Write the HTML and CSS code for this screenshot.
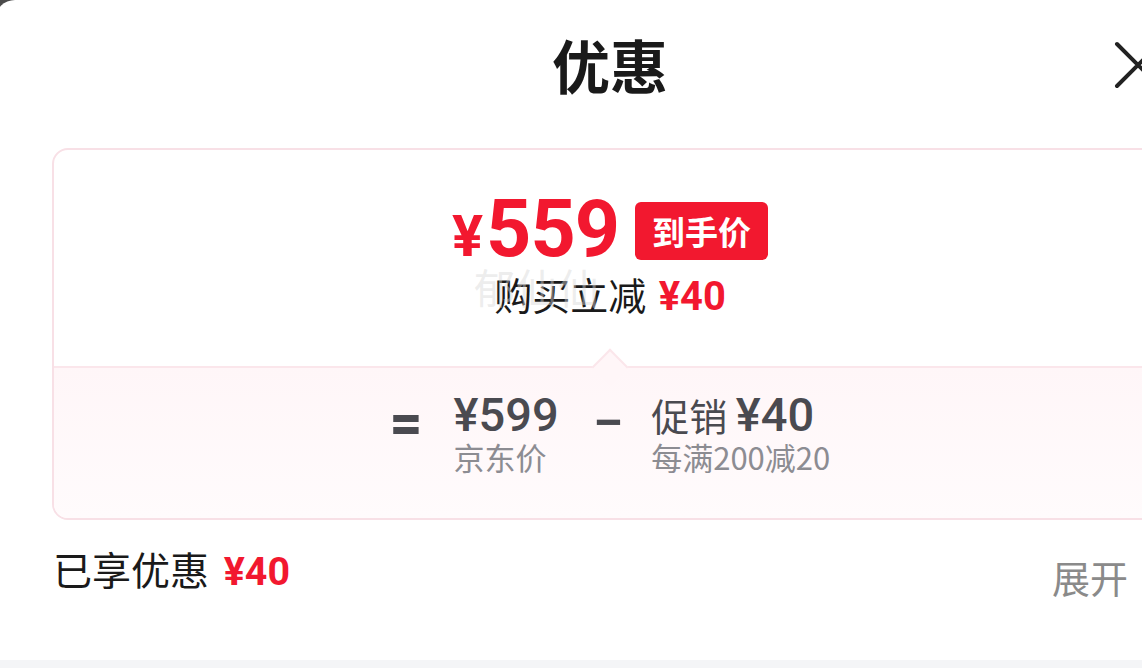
FILE: index.html
```html
<!DOCTYPE html>
<html lang="zh-CN">
<head>
    <meta charset="UTF-8">
    <meta name="viewport" content="width=device-width, initial-scale=1.0">
    <title>优惠</title>
    <link rel="stylesheet" href="styles.css">
</head>
<body>

<div class="sheet">
    <div class="sheet-header">
        <h2 class="sheet-title">优惠</h2>
        <span class="close-btn">
            <svg width="48" height="48" viewBox="0 0 48 48">
                <path d="M3 3 L45 45 M45 3 L3 45" stroke="#222" stroke-width="4" stroke-linecap="round" fill="none"/>
            </svg>
        </span>
    </div>

    <div class="price-card">
        <div class="price-top">
            <div class="final-price">
                <span class="final-amount"><span class="yen">¥</span>559</span>
                <span class="final-tag">到手价</span>
            </div>
            <div class="instant-off">购买立减 <span class="red-num">¥40</span></div>
            <span class="watermark">郁仙仙</span>
        </div>

        <div class="price-formula">
            <span class="pointer"></span>
            <span class="op">=</span>
            <div class="formula-item">
                <div class="formula-main"><span class="num">¥599</span></div>
                <div class="formula-sub">京东价</div>
            </div>
            <span class="op op-minus">−</span>
            <div class="formula-item">
                <div class="formula-main">促销 <span class="num">¥40</span></div>
                <div class="formula-sub">每满200减20</div>
            </div>
        </div>
    </div>

    <div class="saved-row">
        <div class="saved-text">已享优惠 <span class="red-num">¥40</span></div>
        <div class="expand-link">展开</div>
    </div>
</div>
<div class="page-strip"></div>

</body>
</html>
```

FILE: styles.css
```css
/* Alap */
body {
    margin: 0;
    padding: 0;
    background-color: #4b4b4b;
    font-family: "Noto Sans CJK SC", "Noto Sans", sans-serif;
    overflow: hidden;
    width: 1142px;
    height: 668px;
}

.sheet {
    width: 1230px;
    height: 660px;
    margin-left: -5px;
    background-color: #fff;
    border-top-left-radius: 20px;
    position: relative;
}

.sheet-header {
    height: 136px;
    display: flex;
    justify-content: center;
    align-items: center;
    position: relative;
}

.sheet-title {
    margin: 0;
    font-size: 58px;
    font-weight: 700;
    color: #1a1a1a;
    line-height: 1;
    padding-bottom: 8px;
}

.close-btn {
    position: absolute;
    left: 1119px;
    top: 41px;
    width: 48px;
    height: 48px;
}

.close-btn svg {
    display: block;
}

/* Ár kártya */
.price-card {
    margin: 12px 57px 0;
    border: 2px solid #f8e0e6;
    border-radius: 16px;
    overflow: hidden;
}

.price-top {
    height: 216px;
    display: flex;
    flex-direction: column;
    align-items: center;
    position: relative;
}

.final-price {
    display: flex;
    align-items: center;
    gap: 16px;
    margin-top: 40px;
    height: 78px;
}

.final-amount {
    font-family: Roboto, "Liberation Sans", sans-serif;
    font-weight: 700;
    font-size: 79px;
    color: #f2182f;
    line-height: 1;
    letter-spacing: -1px;
}

.final-amount .yen {
    font-size: 58px;
    margin-right: 4px;
}

.final-tag {
    background-color: #f2182f;
    color: #fff;
    font-size: 33px;
    font-weight: 700;
    line-height: 58px;
    height: 58px;
    padding: 0 17px;
    border-radius: 6px;
    margin-top: 4px;
}

.instant-off {
    margin-top: -2px;
    font-size: 38px;
    color: #1a1a1a;
    line-height: 56px;
}

.red-num {
    font-family: Roboto, "Liberation Sans", sans-serif;
    font-weight: 700;
    font-size: 1.05em;
    color: #f2182f;
    margin-left: 4px;
}

.saved-text .red-num {
    font-size: 1.01em;
    margin-left: 6px;
}

.watermark {
    position: absolute;
    left: 420px;
    top: 106px;
    font-size: 41px;
    color: rgba(215, 215, 215, 0.45);
    letter-spacing: 1px;
    pointer-events: none;
}

/* Képlet sor */
.price-formula {
    position: relative;
    height: 152px;
    border-top: 2px solid #fbe6eb;
    background: linear-gradient(#fff6f8, #fffbfc);
    display: flex;
    justify-content: center;
    align-items: flex-start;
    padding-top: 22px;
    box-sizing: border-box;
    color: #4a4a50;
}

.pointer {
    position: absolute;
    top: -14px;
    left: 543px;
    width: 24px;
    height: 24px;
    background-color: #fff6f8;
    border-top: 2px solid #fbe6eb;
    border-left: 2px solid #fbe6eb;
    transform: rotate(45deg);
}

.op {
    font-family: Roboto, "Liberation Sans", sans-serif;
    font-size: 56px;
    font-weight: 900;
    line-height: 50px;
    margin-top: 8px;
    margin-right: 31px;
}

.op-minus {
    font-weight: 500;
    margin-left: 34px;
    margin-right: 27px;
}

.formula-main {
    font-size: 38px;
    line-height: 50px;
    height: 50px;
    white-space: nowrap;
}

.formula-main .num {
    font-family: Roboto, "Liberation Sans", sans-serif;
    font-size: 47px;
    font-weight: 500;
    line-height: 1;
}

.formula-sub {
    font-size: 31px;
    line-height: 34px;
    color: #8c8c92;
    white-space: nowrap;
}

/* Alsó sor */
.saved-row {
    display: flex;
    justify-content: space-between;
    align-items: flex-start;
    padding: 24px 97px 0 58px;
}

.saved-text {
    font-size: 39px;
    color: #1a1a1a;
    line-height: 48px;
}

.expand-link {
    font-size: 38px;
    color: #8a8a8a;
    line-height: 48px;
    margin-top: 9px;
}

.page-strip {
    height: 8px;
    background-color: #f4f5f7;
}
```
